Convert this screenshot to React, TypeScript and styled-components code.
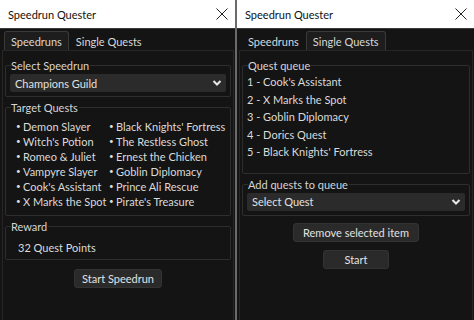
import React from 'react';
import styled, { createGlobalStyle, css } from 'styled-components';

const GlobalStyle = createGlobalStyle`
  html, body {
    margin: 0;
    padding: 0;
    background: #131313;
  }
  body {
    font-family: Lato, "Noto Sans", sans-serif;
    font-size: 11px;
    color: #dcdcdc;
  }
`;

const Desktop = styled.div`
  display: flex;
  width: 474px;
  height: 320px;
  overflow: hidden;
  background: #6a6a6a;
  gap: 2px;
`;

const Window = styled.div<{ width: number }>`
  flex: 0 0 ${({ width }) => width}px;
  display: flex;
  flex-direction: column;
  background: #141414;
`;

const TitleBar = styled.div`
  flex-shrink: 0;
  height: 28px;
  background: #ffffff;
  color: #111;
  display: flex;
  align-items: center;
  justify-content: space-between;
  padding: 0 7px 0 8px;
  font-size: 11px;
  border-bottom: 1px solid #3a3a3a;
`;

const CloseIcon = styled.svg`
  width: 12px;
  height: 12px;
`;

const Body = styled.div`
  flex: 1;
  display: flex;
  flex-direction: column;
  padding: 2px 1px 0 2px;
`;

const TabRow = styled.div`
  display: flex;
  padding-left: 2px;
  height: 19px;
`;

const Tab = styled.div<{ active?: boolean }>`
  padding: 0 6px;
  display: flex;
  align-items: center;
  font-size: 11px;
  color: #d8d8d8;
  border: 1px solid transparent;
  border-bottom: none;
  border-radius: 3px 3px 0 0;
  ${({ active }) => active && css`
    background: #1d1d1d;
    border-color: #3a3a3a;
  `}
`;

const TabPanel = styled.div`
  flex: 1;
  border: 1px solid #262626;
  border-bottom: none;
  padding: 8px 2px 0 2px;
  display: flex;
  flex-direction: column;
  gap: 4px;
`;

const Group = styled.fieldset`
  margin: 0;
  border: 1px solid #2e2e2e;
  border-radius: 2px;
  padding: 0 4px 4px 4px;
`;

const Legend = styled.legend`
  padding: 0 1px 0 0;
  margin-left: 1px;
  font-size: 11px;
  color: #d4d4d4;
  line-height: 13px;
`;

const Select = styled.div`
  height: 18px;
  margin-top: 2px;
  background: #2b2b2b;
  border-radius: 2px;
  display: flex;
  align-items: center;
  justify-content: space-between;
  padding: 0 4px 0 5px;
  font-size: 11px;
  color: #e0e0e0;
`;

const Chevron = styled.svg`
  width: 10px;
  height: 8px;
`;

const QuestGrid = styled.div`
  display: grid;
  grid-template-columns: 93px 1fr;
  padding: 5px 0 2px 6px;
  line-height: 15px;
  font-size: 11px;
  color: #dadada;
  white-space: nowrap;
`;

const Bullet = styled.span`
  &::before {
    content: '•';
    display: inline-block;
    width: 7px;
    line-height: 15px;
    font-size: 8px;
    vertical-align: top;
  }
`;

const Plain = styled.div`
  padding: 8px 0 1px 8px;
  font-size: 11px;
  color: #dadada;
`;

const QueueList = styled.div`
  display: flex;
  flex-direction: column;
  line-height: 17.6px;
  font-size: 11px;
  color: #dadada;
  padding: 1px 0 8px 0;
`;

const ButtonRow = styled.div<{ top: number }>`
  display: flex;
  justify-content: center;
  margin-top: ${({ top }) => top}px;
`;

const Button = styled.div<{ width: number }>`
  width: ${({ width }) => width}px;
  height: 17px;
  background: #2a2a2a;
  border: 1px solid #333;
  border-radius: 3px;
  display: flex;
  align-items: center;
  justify-content: center;
  font-size: 11px;
  color: #e2e2e2;
`;

const leftQuests = ['Demon Slayer', "Witch's Potion", 'Romeo & Juliet', 'Vampyre Slayer', "Cook's Assistant", 'X Marks the Spot'];
const rightQuests = ["Black Knights' Fortress", 'The Restless Ghost', 'Ernest the Chicken', 'Goblin Diplomacy', 'Prince Ali Rescue', "Pirate's Treasure"];
const queue = ["Cook's Assistant", 'X Marks the Spot', 'Goblin Diplomacy', 'Dorics Quest', "Black Knights' Fortress"];

const Close = () => (
  <CloseIcon viewBox="0 0 12 12">
    <path d="M0.5 0.5 L11.5 11.5 M11.5 0.5 L0.5 11.5" stroke="#222" strokeWidth="1" fill="none" />
  </CloseIcon>
);

const Down = () => (
  <Chevron viewBox="0 0 10 8">
    <path d="M1.5 2 L5 5.5 L8.5 2" stroke="#e8e8e8" strokeWidth="2" fill="none" />
  </Chevron>
);

const App: React.FC = () => {
  return (
    <>
      <GlobalStyle />
      <Desktop>
        <Window width={235}>
          <TitleBar>
            Speedrun Quester
            <Close />
          </TitleBar>
          <Body>
            <TabRow>
              <Tab active>Speedruns</Tab>
              <Tab>Single Quests</Tab>
            </TabRow>
            <TabPanel>
              <Group>
                <Legend>Select Speedrun</Legend>
                <Select>
                  Champions Guild
                  <Down />
                </Select>
              </Group>
              <Group>
                <Legend>Target Quests</Legend>
                <QuestGrid>
                  {leftQuests.map((q, i) => (
                    <React.Fragment key={i}>
                      <Bullet>{q}</Bullet>
                      <Bullet>{rightQuests[i]}</Bullet>
                    </React.Fragment>
                  ))}
                </QuestGrid>
              </Group>
              <Group>
                <Legend>Reward</Legend>
                <Plain>32 Quest Points</Plain>
              </Group>
              <ButtonRow top={5}>
                <Button width={86}>Start Speedrun</Button>
              </ButtonRow>
            </TabPanel>
          </Body>
        </Window>
        <Window width={237}>
          <TitleBar>
            Speedrun Quester
            <Close />
          </TitleBar>
          <Body>
            <TabRow>
              <Tab>Speedruns</Tab>
              <Tab active>Single Quests</Tab>
            </TabRow>
            <TabPanel>
              <Group>
                <Legend>Quest queue</Legend>
                <QueueList>
                  {queue.map((q, i) => (
                    <span key={i}>{i + 1} - {q}</span>
                  ))}
                </QueueList>
              </Group>
              <Group>
                <Legend>Add quests to queue</Legend>
                <Select>
                  Select Quest
                  <Down />
                </Select>
              </Group>
              <ButtonRow top={3}>
                <Button width={124}>Remove selected item</Button>
              </ButtonRow>
              <ButtonRow top={4}>
                <Button width={64}>Start</Button>
              </ButtonRow>
            </TabPanel>
          </Body>
        </Window>
      </Desktop>
    </>
  );
};

export default App;
